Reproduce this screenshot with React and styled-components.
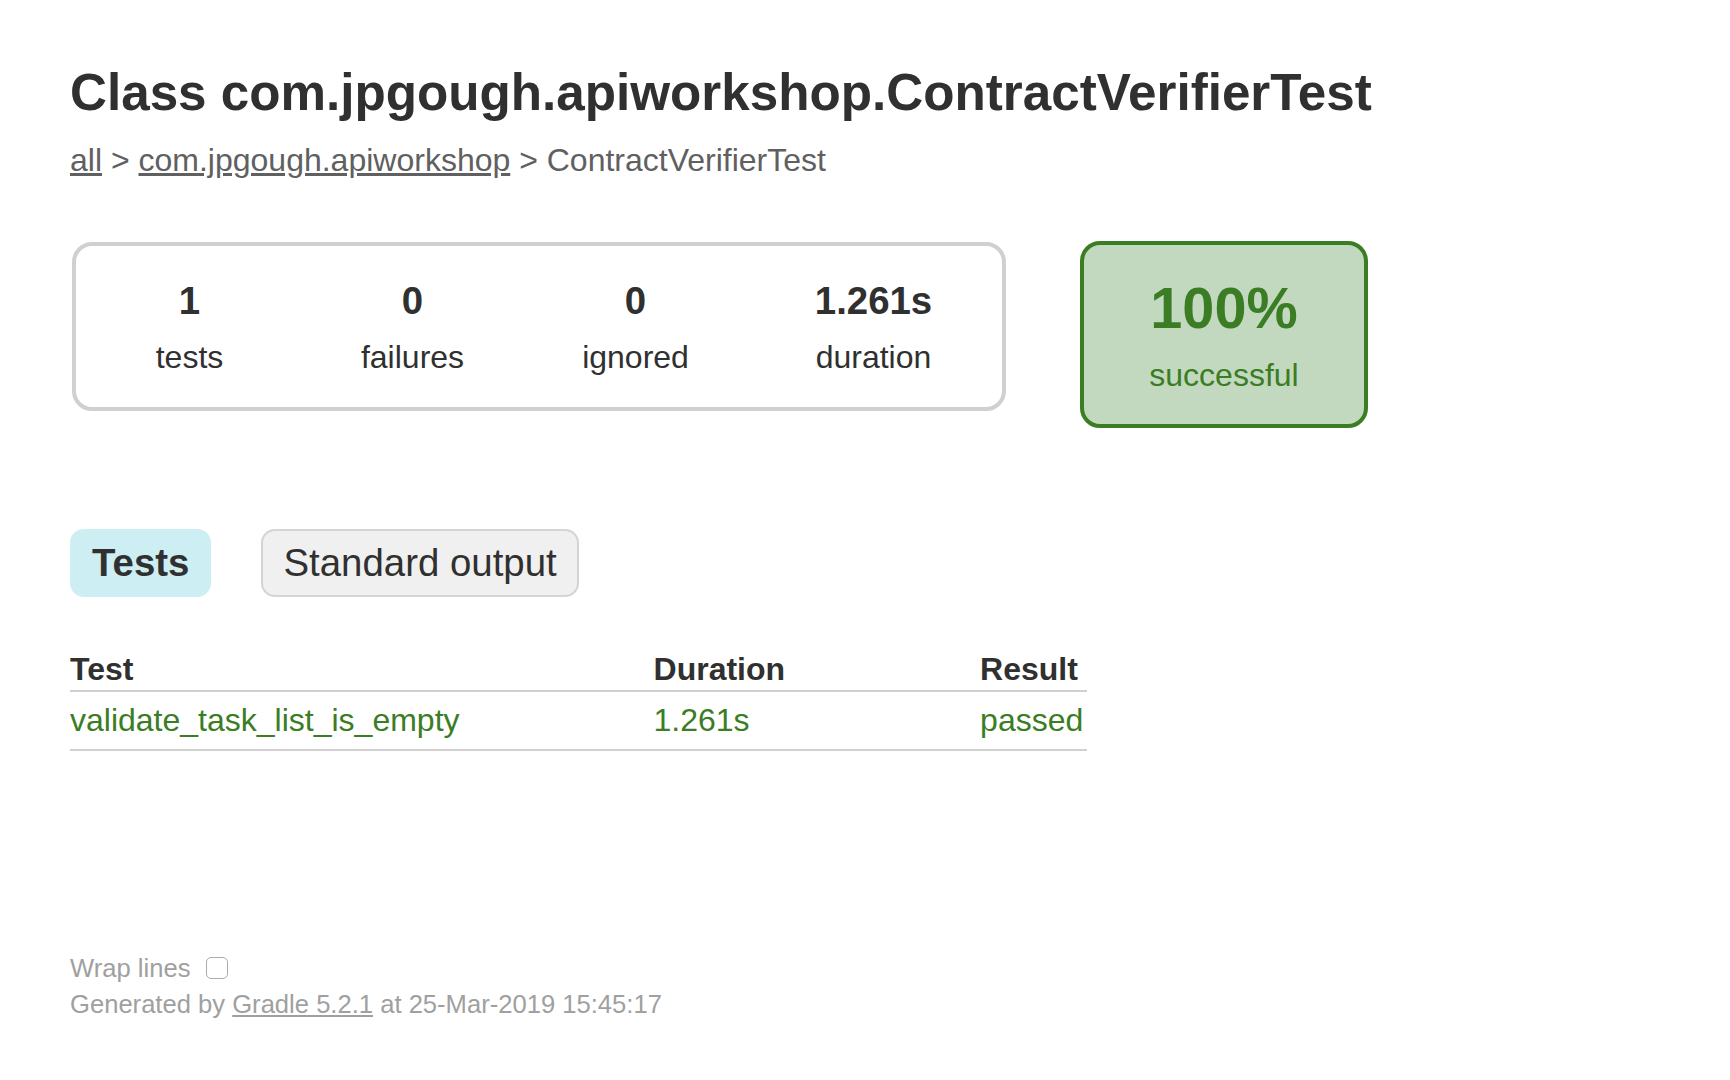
import styled, { createGlobalStyle } from 'styled-components';

const stats = [
  { value: '1', label: 'tests' },
  { value: '0', label: 'failures' },
  { value: '0', label: 'ignored' },
  { value: '1.261s', label: 'duration', wide: true },
];

const tests = [{ name: 'validate_task_list_is_empty', duration: '1.261s', result: 'passed' }];

export default function App() {
  return (
    <>
      <GlobalStyle />
      <Content>
        <Heading>Class com.jpgough.apiworkshop.ContractVerifierTest</Heading>
        <Breadcrumbs>
          <CrumbLink href="#">all</CrumbLink> &gt; <CrumbLink href="#">com.jpgough.apiworkshop</CrumbLink> &gt;
          ContractVerifierTest
        </Breadcrumbs>

        <Summary>
          <SummaryGroup>
            {stats.map((stat) => (
              <InfoBox key={stat.label} wide={stat.wide}>
                <Counter>{stat.value}</Counter>
                <InfoLabel>{stat.label}</InfoLabel>
              </InfoBox>
            ))}
          </SummaryGroup>
          <SuccessRate>
            <Percent>100%</Percent>
            <InfoLabel>successful</InfoLabel>
          </SuccessRate>
        </Summary>

        <TabLinks>
          <Tab selected>
            <TabTitle>Tests</TabTitle>
          </Tab>
          <Tab>
            <TabLink href="#">Standard output</TabLink>
          </Tab>
        </TabLinks>

        <TestTable>
          <thead>
            <tr>
              <Th>Test</Th>
              <Th>Duration</Th>
              <Th>Result</Th>
            </tr>
          </thead>
          <tbody>
            {tests.map((test) => (
              <tr key={test.name}>
                <Td>{test.name}</Td>
                <Td>{test.duration}</Td>
                <Td>{test.result}</Td>
              </tr>
            ))}
          </tbody>
        </TestTable>

        <Footer>
          <WrapToggle>
            <span>Wrap lines</span> <Checkbox type="checkbox" />
          </WrapToggle>
          Generated by <FooterLink href="#">Gradle 5.2.1</FooterLink> at 25-Mar-2019 15:45:17
        </Footer>
      </Content>
    </>
  );
}

const GlobalStyle = createGlobalStyle`
  body {
    margin: 0;
    padding: 0;
    background: #ffffff;
    font-family: 'Liberation Sans', Arial, Helvetica, sans-serif;
    font-size: 32px;
    color: #303030;
  }
`;

const Content = styled.div`
  padding: 63px 70px 60px;
`;

const Heading = styled.h1`
  margin: 0 0 20px;
  font-size: 51.2px;
  font-weight: bold;
  white-space: nowrap;
  color: #303030;
`;

const Breadcrumbs = styled.div`
  color: #606060;
  white-space: nowrap;
`;

const CrumbLink = styled.a`
  color: #606060;
  text-decoration: underline;
`;

const Summary = styled.div`
  margin: 60px 0 80px 2px;
  display: flex;
  align-items: flex-start;
`;

const SummaryGroup = styled.div`
  display: flex;
  margin-top: 3px;
  padding: 2px;
  border: solid 4px #d0d0d0;
  border-radius: 20px;
`;

const InfoBox = styled.div`
  width: ${(props) => (props.wide ? '250px' : '220px')};
  margin: 0 1.5px;
  padding: 31px 0 29px;
  text-align: center;
`;

const Counter = styled.p`
  margin: 0 0 16px;
  font-size: 38.4px;
  font-weight: bold;
`;

const InfoLabel = styled.p`
  margin: 0;
`;

const SuccessRate = styled.div`
  width: 280px;
  margin: 2px 0 0 74px;
  padding: 30px 0;
  text-align: center;
  color: #3a7d24;
  background-color: #c3d9bf;
  border: solid 4px #3a7d24;
  border-radius: 20px;
`;

const Percent = styled.p`
  margin: 0 0 16px;
  font-size: 57.6px;
  font-weight: bold;
`;

const TabLinks = styled.ul`
  display: flex;
  margin: 0 0 32px;
  padding: 21px 0 20px;
  list-style: none;
`;

const Tab = styled.li`
  margin-right: 50px;
  padding: 10px 20px;
  border: solid 2px ${(props) => (props.selected ? '#cdeef3' : '#d4d4d4')};
  border-radius: 14px;
  background-color: ${(props) => (props.selected ? '#cdeef3' : '#f0f0f0')};
`;

const TabTitle = styled.h2`
  margin: 0;
  font-size: 38.4px;
  font-weight: bold;
  white-space: nowrap;
`;

const TabLink = styled.a`
  display: block;
  font-size: 38.4px;
  color: #303030;
  text-decoration: none;
  white-space: nowrap;
`;

const TestTable = styled.table`
  border-collapse: collapse;
  border-bottom: solid 2px #d0d0d0;
`;

const Th = styled.th`
  padding: 2px 0 2px 194px;
  text-align: left;
  white-space: nowrap;
  border-bottom: solid 2px #d0d0d0;

  &:first-child {
    padding-left: 0;
  }

  &:last-child {
    padding-left: 195px;
    padding-right: 4px;
  }
`;

const Td = styled.td`
  padding: 10px 0 10px 194px;
  white-space: nowrap;
  color: #3a7d24;

  &:first-child {
    padding-left: 0;
  }

  &:last-child {
    padding-left: 195px;
    padding-right: 4px;
  }
`;

const Footer = styled.div`
  margin-top: 200px;
  font-size: 25.6px;
  color: #a0a0a0;
  white-space: nowrap;
`;

const WrapToggle = styled.div`
  margin-bottom: 5px;

  span {
    vertical-align: middle;
  }
`;

const Checkbox = styled.input`
  appearance: none;
  width: 22px;
  height: 22px;
  margin: 6px 6px 6px 8px;
  vertical-align: middle;
  border: solid 1.5px #ababab;
  border-radius: 5px;
  background: #ffffff;
`;

const FooterLink = styled.a`
  color: #a0a0a0;
  text-decoration: underline;
`;
